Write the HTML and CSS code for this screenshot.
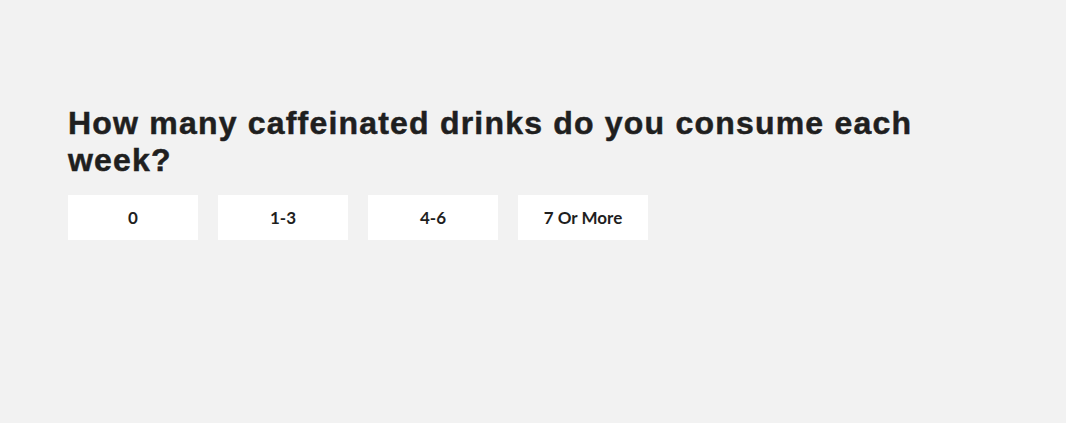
FILE: index.html
```html
<!DOCTYPE html>
<html lang="en">
<head>
  <meta charset="UTF-8" />
  <meta name="viewport" content="width=device-width, initial-scale=1.0"/>
  <title>Caffeine Quiz</title>
  <link rel="stylesheet" href="styles.css">
</head>
<body>
  <div class="question">
    <h2>How many caffeinated drinks do you consume each week?</h2>
    <div class="answers">
      <button class="answer">0</button>
      <button class="answer">1-3</button>
      <button class="answer">4-6</button>
      <button class="answer">7 Or More</button>
    </div>
  </div>
</body>
</html>
```

FILE: styles.css
```css
body { margin: 0; background: #f2f2f2; color: #1f1f1f; }
.question { padding: 105px 68px 0; max-width: 880px; }
h2 {
  font-family: "Liberation Sans", Arial, sans-serif;
  font-weight: bold;
  font-size: 32px;
  line-height: 37px;
  letter-spacing: 1.2px;
  -webkit-text-stroke: 0.5px #1f1f1f;
  margin: 0 0 16px;
}
.answers { display: flex; gap: 20px; }
.answer {
  width: 130px;
  height: 45px;
  border: none;
  background: #fff;
  font-family: Lato, sans-serif;
  font-weight: bold;
  font-size: 17px;
  color: #1f1f1f;
  cursor: pointer;
}
```
